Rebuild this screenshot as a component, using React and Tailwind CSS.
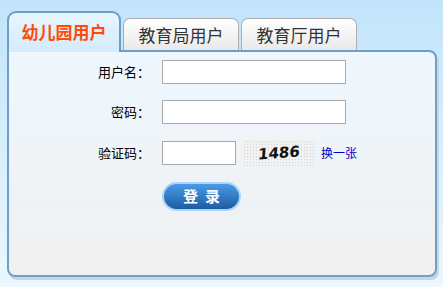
import React from 'react';

const font = { fontFamily: '"Noto Sans CJK SC", "Noto Sans", sans-serif' };

const Tab = ({ label, active }) => {
  if (active) {
    return (
      <div className="relative z-10 -mb-[2px] flex h-[41px] w-[114px] items-center justify-center rounded-t-[9px] border-2 border-b-0 border-[#6d9fca] bg-gradient-to-b from-[#eaf5fd] to-[#d3ebfb] pb-[2px] text-[17px] font-bold text-[#ff4a0a]">
        {label}
      </div>
    );
  }
  return (
    <div className="flex h-[32px] w-[116px] items-center justify-center rounded-t-[7px] border border-b-0 border-[#adadad] bg-gradient-to-b from-[#ffffff] to-[#e9e9e9] text-[17px] text-[#333]">
      {label}
    </div>
  );
};

const Row = ({ label, children }) => (
  <div className="flex items-center">
    <label className="w-[141px] text-right text-[13px] text-black">{label}</label>
    <div className="ml-[12px] flex items-center">{children}</div>
  </div>
);

export default function App() {
  return (
    <div style={font} className="h-[287px] w-[443px] overflow-hidden bg-gradient-to-b from-[#c2e4fb] to-[#ecf7fe] px-[7px] pt-[11px]">
      <div className="w-[430px]">
        {/* tabs */}
        <div className="flex items-end gap-[2px]">
          <Tab label="幼儿园用户" active />
          <Tab label="教育局用户" />
          <Tab label="教育厅用户" />
        </div>

        {/* panel */}
        <div className="h-[227px] rounded-b-[8px] rounded-tr-[8px] border-2 border-[#6d9fca] bg-gradient-to-b from-[#eef7fe] to-[#f0f0f0] pt-[8px] shadow-[2px_3px_0_#cdd5dc]">
          <div className="flex flex-col gap-[16px]">
            <Row label="用户名：">
              <input className="h-[24px] w-[184px] border border-[#a9a9a9] bg-white outline-none" />
            </Row>
            <Row label="密码：">
              <input type="password" className="h-[24px] w-[184px] border border-[#a9a9a9] bg-white outline-none" />
            </Row>
            <Row label="验证码：">
              <input className="h-[24px] w-[74px] border border-[#a9a9a9] bg-white outline-none" />
              <div className="ml-[7px] flex h-[26px] w-[71px] items-center justify-center bg-[#f1f1f1] bg-[radial-gradient(#d6d6d6_0.6px,transparent_0.8px)] bg-[length:3px_3px]">
                <span
                  style={{ fontFamily: '"DejaVu Sans", sans-serif' }}
                  className="inline-block -rotate-[4deg] skew-x-[-8deg] text-[15px] font-bold tracking-[0px] text-[#111]"
                >
                  1486
                </span>
              </div>
              <a href="#" className="ml-[7px] text-[12px] text-[#0000cc]">换一张</a>
            </Row>
          </div>

          <div className="ml-[153px] mt-[16px]">
            <button className="flex h-[29px] w-[79px] items-center justify-center rounded-full bg-[#a9d4fb] p-[2px]">
              <span className="flex h-full w-full items-center justify-center rounded-full bg-gradient-to-b from-[#4a9be6] to-[#1d5ca3] pl-[7px] text-[15px] font-bold tracking-[7px] text-white">
                登录
              </span>
            </button>
          </div>
        </div>
      </div>
    </div>
  );
}
